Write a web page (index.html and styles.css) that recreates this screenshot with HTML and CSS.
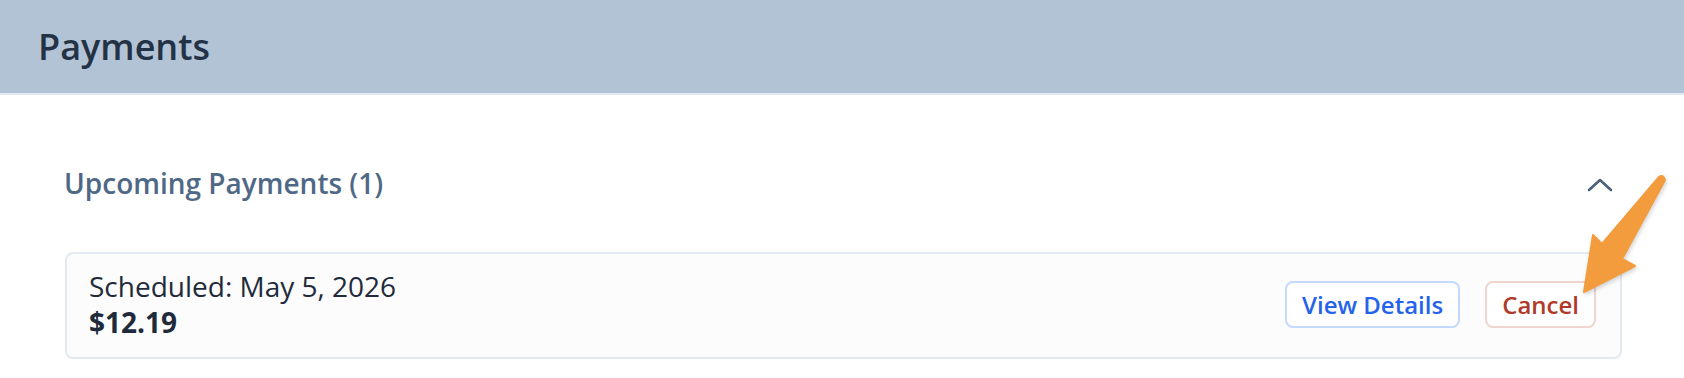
FILE: index.html
```html
<!DOCTYPE html>
<html lang="en">

<head>
  <meta charset="UTF-8" />
  <meta name="viewport" content="width=device-width, initial-scale=1" />
  <title>Payments</title>
  <link rel="stylesheet" href="styles.css">
</head>

<body>

  <header class="page-header">
    <h1>Payments</h1>
  </header>

  <main class="content">
    <div class="section-head">
      <h2>Upcoming Payments (1)</h2>
      <button class="toggle-btn" title="Collapse">
        <svg width="28" height="16" viewBox="0 0 28 16">
          <polyline points="3,13 14,3 25,13" fill="none" stroke="#4b6079" stroke-width="2.6" stroke-linecap="round" stroke-linejoin="round" />
        </svg>
      </button>
    </div>

    <div class="payment-card">
      <div class="payment-info">
        <div class="payment-date">Scheduled: May 5, 2026</div>
        <div class="payment-amount">$12.19</div>
      </div>
      <div class="payment-actions">
        <button class="btn btn-details">View Details</button>
        <button class="btn btn-cancel">Cancel</button>
      </div>
    </div>
  </main>

  <!-- callout arrow pointing at Cancel -->
  <svg class="callout-arrow" width="110" height="150" viewBox="0 0 110 150">
    <path d="M14 132 L23 75 L32 84 L89 17 Q93 14 95 20 L52 99 L65 106 Z" fill="#f29c3d" stroke="#f29c3d" stroke-width="2" stroke-linejoin="round" />
  </svg>

</body>

</html>
```

FILE: styles.css
```css
body {
  font-family: "Open Sans", "Noto Sans", Arial, sans-serif;
  margin: 0;
  background-color: #ffffff;
  color: #1f2b3b;
  position: relative;
}

.page-header {
  background-color: #b3c3d6;
  height: 93px;
  padding: 0 38px;
  display: flex;
  align-items: center;
  border-bottom: 2px solid #e0e7f0;
}

.page-header h1 {
  margin: 0;
  font-size: 36px;
  font-weight: 600;
  color: #233345;
}

.content {
  padding: 0 62px 20px 64px;
}

.section-head {
  display: flex;
  justify-content: space-between;
  align-items: center;
  margin-top: 69px;
}

.section-head h2 {
  margin: 0;
  font-size: 28px;
  font-weight: 600;
  color: #4f6886;
}

.toggle-btn {
  background: transparent;
  border: none;
  padding: 0;
  margin-right: 8px;
  margin-top: 3px;
  cursor: pointer;
  display: flex;
}

.payment-card {
  margin-top: 50px;
  margin-left: 1px;
  background-color: #fcfcfd;
  border: 2px solid #e3e9f0;
  border-radius: 8px;
  padding: 14px 24px 17px 22px;
  display: flex;
  justify-content: space-between;
  align-items: center;
}

.payment-info {
  font-size: 28px;
  line-height: 36px;
  color: #1f2b3b;
}

.payment-amount {
  font-weight: 700;
}

.payment-actions {
  display: flex;
  gap: 25px;
}

.btn {
  font-family: inherit;
  font-size: 24px;
  font-weight: 600;
  line-height: 43px;
  padding: 0 15px;
  background-color: #ffffff;
  border: 2px solid;
  border-radius: 8px;
  cursor: pointer;
}

.btn-details {
  color: #2563eb;
  border-color: #c3dafe;
}

.btn-cancel {
  color: #b03a2a;
  border-color: #f0d4cf;
}

.callout-arrow {
  position: absolute;
  left: 1570px;
  top: 160px;
  filter: drop-shadow(1px 2px 2px rgba(0, 0, 0, 0.18));
}
```
